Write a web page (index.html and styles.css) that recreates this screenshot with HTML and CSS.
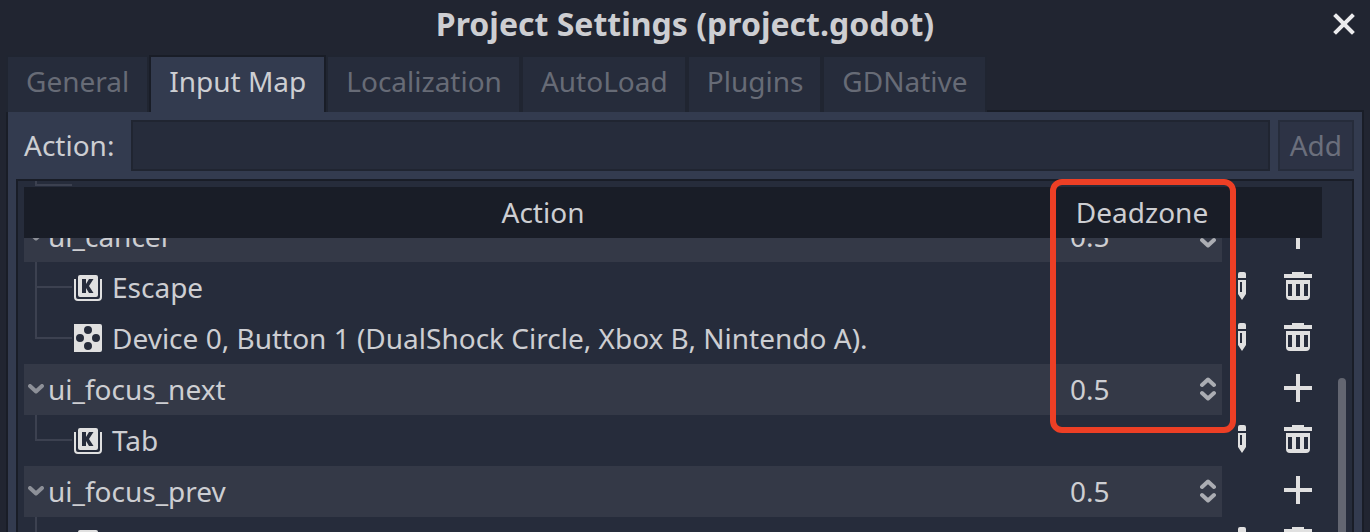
FILE: index.html
```html
<!DOCTYPE html>
<html lang="en">
<head>
<meta charset="utf-8">
<title>Project Settings (project.godot)</title>
<link rel="stylesheet" href="styles.css">
</head>
<body>
<svg class="sprite" aria-hidden="true">
  <symbol id="key" viewBox="0 0 28 28">
    <path fill="currentColor" fill-rule="evenodd" d="M6 2h16a2 2 0 0 1 2 2v18a2 2 0 0 1-2 2H6a2 2 0 0 1-2-2V4a2 2 0 0 1 2-2zM8 6v14h4v-5l3 5h4.500l-4.500-7 4.500-7H15l-3 5V6z"/>
    <path fill="currentColor" d="M0 6h2v18a2 2 0 0 0 2 2h20a2 2 0 0 0 2-2V6h2v18a4 4 0 0 1-4 4H4a4 4 0 0 1-4-4z"/>
  </symbol>
  <symbol id="joypad" viewBox="0 0 28 28">
    <path fill="currentColor" fill-rule="evenodd" d="M0 0h26a2 2 0 0 1 2 2v24a2 2 0 0 1-2 2H0zM10 6a4 4 0 1 0 8 0a4 4 0 1 0-8 0M2 14a4 4 0 1 0 8 0a4 4 0 1 0-8 0M18 14a4 4 0 1 0 8 0a4 4 0 1 0-8 0M10 22a4 4 0 1 0 8 0a4 4 0 1 0-8 0"/>
  </symbol>
  <symbol id="pencil" viewBox="0 0 28 28">
    <path fill="currentColor" fill-rule="evenodd" d="M10 6V2a2 2 0 0 1 2-2h4a2 2 0 0 1 2 2v4zM10 8h8v14l-4 6-4-6zM12 10v10h2V10z"/>
  </symbol>
  <symbol id="trash" viewBox="0 0 28 28">
    <path fill="currentColor" fill-rule="evenodd" d="M8 0h12v2h8v4H0V2h8zM2 8h24v16a4 4 0 0 1-4 4H6a4 4 0 0 1-4-4zM4 12v12h4V12zM12 12v12h4V12zM20 12v12h4V12z"/>
  </symbol>
  <symbol id="plus" viewBox="0 0 28 28">
    <path fill="currentColor" d="M12 0h4v12h12v4H16v12h-4V16H0v-4h12z"/>
  </symbol>
  <symbol id="chevron" viewBox="0 0 16 10">
    <path fill="none" stroke="currentColor" stroke-width="4" stroke-linecap="round" stroke-linejoin="round" d="M2 2l6 5.500 6-5.500"/>
  </symbol>
  <symbol id="updown" viewBox="0 0 16 24">
    <path fill="none" stroke="currentColor" stroke-width="4" stroke-linecap="round" stroke-linejoin="round" d="M2 8l6-5.500 6 5.500M2 16l6 5.500 6-5.500"/>
  </symbol>
</svg>

<header class="titlebar">
  <h1 class="title">Project Settings (project.godot)</h1>
  <button class="close" aria-label="Close">
    <svg width="22" height="22" viewBox="0 0 22 22"><path fill="none" stroke="currentColor" stroke-width="4" stroke-linecap="square" d="M3 3l16 16M19 3L3 19"/></svg>
  </button>
</header>

<nav class="tabs" role="tablist">
  <button class="tab" role="tab">General</button>
  <button class="tab tab-active" role="tab" aria-selected="true">Input Map</button>
  <button class="tab" role="tab">Localization</button>
  <button class="tab" role="tab">AutoLoad</button>
  <button class="tab" role="tab">Plugins</button>
  <button class="tab" role="tab">GDNative</button>
</nav>

<main class="panel">
  <form class="action-form">
    <label class="action-label" for="action">Action:</label>
    <input class="action-input" id="action" type="text">
    <button class="add" type="button" disabled>Add</button>
  </form>

  <section class="tree-wrap">
    <div class="tree">
      <table class="map">
        <thead>
          <tr><th>Action</th><th class="col-zone">Deadzone</th><th class="col-tools" aria-label="Tools"></th></tr>
        </thead>
        <tbody>
          <tr class="event last">
            <td><div class="cell"></div></td><td></td><td></td>
          </tr>
          <tr class="group">
            <td><div class="cell"><button class="fold" aria-label="Collapse"><svg width="16" height="10"><use href="#chevron"/></svg></button>ui_cancel</div></td>
            <td><div class="zone"><input class="zone-input" type="text" value="0.5" aria-label="Deadzone of ui_cancel"><button class="spin" aria-label="Change value"><svg width="16" height="24"><use href="#updown"/></svg></button></div></td>
            <td><div class="tools"><button class="tool" aria-label="Add event"><svg width="28" height="28"><use href="#plus"/></svg></button></div></td>
          </tr>
          <tr class="event">
            <td><div class="cell"><svg class="kind" width="28" height="28"><use href="#key"/></svg>Escape</div></td>
            <td></td>
            <td><div class="tools"><button class="tool" aria-label="Edit"><svg width="28" height="28"><use href="#pencil"/></svg></button><button class="tool" aria-label="Remove"><svg width="28" height="28"><use href="#trash"/></svg></button></div></td>
          </tr>
          <tr class="event last">
            <td><div class="cell"><svg class="kind" width="28" height="28"><use href="#joypad"/></svg>Device 0, Button 1 (DualShock Circle, Xbox B, Nintendo A).</div></td>
            <td></td>
            <td><div class="tools"><button class="tool" aria-label="Edit"><svg width="28" height="28"><use href="#pencil"/></svg></button><button class="tool" aria-label="Remove"><svg width="28" height="28"><use href="#trash"/></svg></button></div></td>
          </tr>
          <tr class="group">
            <td><div class="cell"><button class="fold" aria-label="Collapse"><svg width="16" height="10"><use href="#chevron"/></svg></button>ui_focus_next</div></td>
            <td><div class="zone"><input class="zone-input" type="text" value="0.5" aria-label="Deadzone of ui_focus_next"><button class="spin" aria-label="Change value"><svg width="16" height="24"><use href="#updown"/></svg></button></div></td>
            <td><div class="tools"><button class="tool" aria-label="Add event"><svg width="28" height="28"><use href="#plus"/></svg></button></div></td>
          </tr>
          <tr class="event last">
            <td><div class="cell"><svg class="kind" width="28" height="28"><use href="#key"/></svg>Tab</div></td>
            <td></td>
            <td><div class="tools"><button class="tool" aria-label="Edit"><svg width="28" height="28"><use href="#pencil"/></svg></button><button class="tool" aria-label="Remove"><svg width="28" height="28"><use href="#trash"/></svg></button></div></td>
          </tr>
          <tr class="group">
            <td><div class="cell"><button class="fold" aria-label="Collapse"><svg width="16" height="10"><use href="#chevron"/></svg></button>ui_focus_prev</div></td>
            <td><div class="zone"><input class="zone-input" type="text" value="0.5" aria-label="Deadzone of ui_focus_prev"><button class="spin" aria-label="Change value"><svg width="16" height="24"><use href="#updown"/></svg></button></div></td>
            <td><div class="tools"><button class="tool" aria-label="Add event"><svg width="28" height="28"><use href="#plus"/></svg></button></div></td>
          </tr>
          <tr class="event last">
            <td><div class="cell"><svg class="kind" width="28" height="28"><use href="#key"/></svg>Shift+Tab</div></td>
            <td></td>
            <td><div class="tools"><button class="tool" aria-label="Edit"><svg width="28" height="28"><use href="#pencil"/></svg></button><button class="tool" aria-label="Remove"><svg width="28" height="28"><use href="#trash"/></svg></button></div></td>
          </tr>
        </tbody>
      </table>
      <div class="scrollbar"><div class="thumb"></div></div>
    </div>
    <div class="highlight"></div>
  </section>
</main>
</body>
</html>
```
FILE: styles.css
```css
:root {
  --window: #212531;
  --base: #333b4f;
  --dark: #262c3b;
  --darker: #202531;
  --darkest: #191d27;
  --group: #343947;
  --guide: #3c4150;
  --text: #cdced2;
  --muted: #676b76;
  --icon: #e0e0e0;
  --mark: #ed3f25;
}

* { box-sizing: border-box; }

html, body { height: 100%; }

body {
  margin: 0;
  overflow: hidden;
  background: var(--window);
  color: var(--text);
  font: 28px/38px "Noto Sans", sans-serif;
}

button, input { font: inherit; color: inherit; }
button { background: none; border: 0; padding: 0; }
svg { display: block; }
.sprite { position: absolute; width: 0; height: 0; }

.titlebar {
  display: grid;
  grid-template-columns: 1fr auto 1fr;
  align-items: center;
  height: 47px;
  padding: 0 15px;
}
.title { grid-column: 2; margin: 0; font-size: 32px; line-height: 46px; font-weight: 700; }
.close { justify-self: end; color: #ebebed; }

.tabs { position: relative; z-index: 1; display: flex; margin: 8px 6px 0; }
.tab {
  height: 57px;
  padding: 0 18px 8px;
  border: 2px solid var(--darker);
  border-bottom: 0;
  background: var(--dark);
  color: var(--muted);
}
.tab-active { border-color: var(--darkest); background: var(--base); color: var(--text); }
.tab-active ~ .tab { padding-right: 17px; }

.panel {
  margin: -2px 6px 0;
  padding: 8px;
  border: 2px solid var(--darkest);
  background: var(--base);
}

.action-form { display: flex; height: 51px; }
.action-label { padding: 0 17px 0 8px; line-height: 51px; }
.action-input {
  flex: 1;
  min-width: 0;
  padding: 0 8px;
  border: 2px solid var(--darker);
  background: var(--dark);
}
.add {
  margin-left: 8px;
  padding: 0 10px 2px;
  border: 2px solid #262c3b;
  background: #2d3345;
  color: #6b6f7c;
}

.tree-wrap { position: relative; margin-top: 8px; }
.tree {
  display: flex;
  align-items: stretch;
  overflow: hidden;
  padding-left: 6px;
  border: 2px solid var(--darkest);
  background: var(--dark);
}

.map {
  flex: 1;
  margin-top: -72px;
  border-spacing: 0;
  table-layout: fixed;
}
.map th, .map td { height: 51px; padding: 0; }
.map th { padding-bottom: 2px; font-weight: 400; }
.map thead { position: sticky; top: 6px; z-index: 1; background: var(--darkest); }
.col-zone { width: 160px; }
.col-tools { width: 100px; }
.group td:not(:last-child) { background: var(--group); }

.cell {
  display: flex;
  align-items: center;
  height: 51px;
  padding: 0 0 2px 4px;
  white-space: nowrap;
}
.fold { margin-right: 4px; color: #8d9098; }
.event .cell { position: relative; padding-left: 50px; }
.event .cell::before,
.event .cell::after { content: ""; position: absolute; left: 11px; background: var(--guide); }
.event .cell::before { top: 0; width: 2px; height: 51px; }
.event.last .cell::before { height: 26px; }
.event .cell::after { top: 24px; width: 37px; height: 2px; }
.kind { margin-right: 10px; color: var(--icon); }

.zone { display: flex; align-items: center; justify-content: space-between; padding: 0 6px 2px 8px; }
.zone-input { width: 80px; height: 38px; padding: 0; border: 0; background: none; }
.spin { color: #abadb3; }

.tools { display: flex; justify-content: flex-end; gap: 28px; padding: 0 10px 4px 0; }
.tool { color: var(--icon); }

.scrollbar { position: relative; width: 30px; }
.thumb {
  position: absolute;
  top: 197px;
  right: 6px;
  bottom: 6px;
  width: 8px;
  border-radius: 4px;
  background: #636671;
}

.highlight {
  position: absolute;
  z-index: 2;
  top: 0;
  right: 118px;
  width: 186px;
  height: 254px;
  border: 6px solid var(--mark);
  border-radius: 12px;
}
```
